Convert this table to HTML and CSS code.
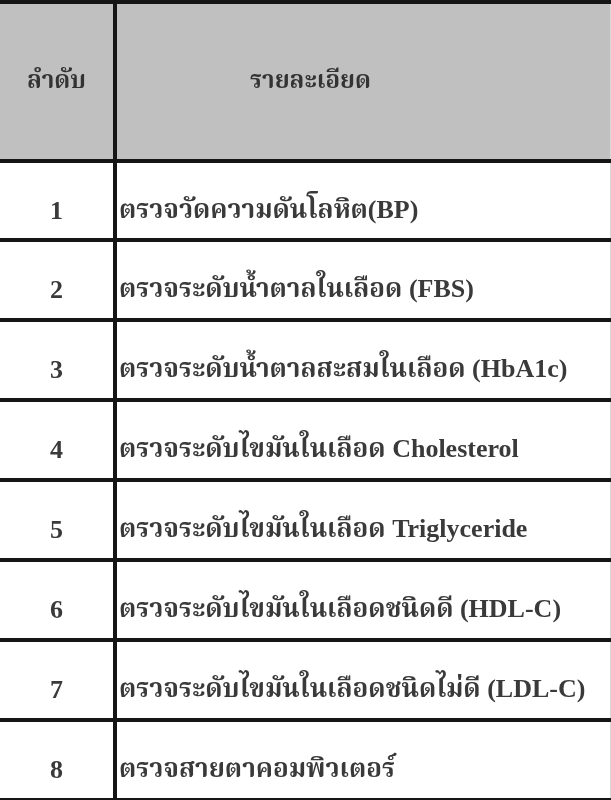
FILE: index.html
```html
<!DOCTYPE html>
<html lang="th">
<head>
<meta charset="utf-8">
<title>รายการตรวจ</title>
<link rel="stylesheet" href="styles.css">
</head>
<body>
<table class="tbl">
  <thead>
    <tr class="head">
      <th class="num">ลำดับ</th>
      <th class="desc-h">รายละเอียด</th>
    </tr>
  </thead>
  <tbody>
    <tr class="row first"><td class="num">1</td><td class="desc">ตรวจวัดความดันโลหิต(BP)</td></tr>
    <tr class="row"><td class="num">2</td><td class="desc">ตรวจระดับน้ำตาลในเลือด (FBS)</td></tr>
    <tr class="row"><td class="num">3</td><td class="desc">ตรวจระดับน้ำตาลสะสมในเลือด (HbA1c)</td></tr>
    <tr class="row"><td class="num">4</td><td class="desc">ตรวจระดับไขมันในเลือด Cholesterol</td></tr>
    <tr class="row"><td class="num">5</td><td class="desc">ตรวจระดับไขมันในเลือด Triglyceride</td></tr>
    <tr class="row"><td class="num">6</td><td class="desc">ตรวจระดับไขมันในเลือดชนิดดี (HDL-C)</td></tr>
    <tr class="row"><td class="num">7</td><td class="desc">ตรวจระดับไขมันในเลือดชนิดไม่ดี (LDL-C)</td></tr>
    <tr class="row"><td class="num">8</td><td class="desc">ตรวจสายตาคอมพิวเตอร์</td></tr>
  </tbody>
</table>
</body>
</html>
```
FILE: styles.css
```css
html, body {
  margin: 0;
  padding: 0;
  background: #ffffff;
}
body {
  width: 611px;
  height: 800px;
  overflow: hidden;
}
.tbl {
  width: 611px;
  border-collapse: collapse;
  table-layout: fixed;
  font-family: "Liberation Serif", "Noto Serif Thai", "Noto Sans Thai", "Garuda", "Norasi", "Loma", serif;
  font-weight: bold;
  color: #3a3a3a;
  filter: blur(0.5px);
}
.tbl th, .tbl td {
  border-top: 4px solid #151515;
  border-bottom: 4px solid #151515;
  padding: 0;
}
.tbl .num {
  width: 113px;
  border-right: 4px solid #151515;
  text-align: center;
}
.head {
  height: 159px;
  background: #c0c0c0;
}
.head th {
  font-size: 24px;
  color: #333;
  vertical-align: middle;
}
.head .desc-h {
  padding-right: 106px;
  border-right: 1px solid #d8d8d8;
}
.row {
  height: 80px;
}
.row.first {
  height: 79px;
}
.row td {
  font-size: 26px;
  vertical-align: middle;
  padding-top: 20px;
}
.row .desc {
  padding-left: 2px;
  white-space: nowrap;
  overflow: hidden;
  border-right: 1px solid #d8d8d8;
}
```
